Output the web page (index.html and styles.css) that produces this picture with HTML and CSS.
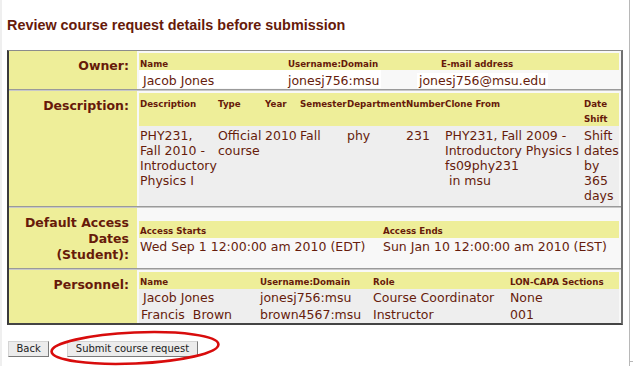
FILE: index.html
```html
<!DOCTYPE html>
<html>
<head>
<meta charset="utf-8">
<title>Review course request</title>
<link rel="stylesheet" href="styles.css">
</head>
<body>
<div class="chrome-left"></div>
<div class="chrome-right"></div>
<div class="chrome-tick"></div>
<div class="page">
  <h1 class="title">Review course request details before submission</h1>
  <table class="pick">
    <tr>
      <th class="lab">Owner:</th>
      <td class="val owner-cell">
        <table class="inner owner">
          <colgroup><col class="o1"><col class="o2"><col class="o3"></colgroup>
          <tr class="hd"><th><span>Name</span></th><th class="p2"><span>Username:Domain</span></th><th class="em"><span>E-mail address</span></th></tr>
          <tr class="dw"><td class="w p4">Jacob Jones</td><td class="w p2">jonesj756:msu</td><td><span class="wbox">jonesj756@msu.edu</span></td></tr>
        </table>
      </td>
    </tr>
    <tr class="sep"><td colspan="2"></td></tr>
    <tr>
      <th class="lab">Description:</th>
      <td class="val">
        <table class="inner desc">
          <colgroup><col class="d1"><col class="d2"><col class="d3"><col class="d4"><col class="d5"><col class="d6"><col class="d7"><col class="d8"></colgroup>
          <tr class="hd"><th><span>Description</span></th><th><span>Type</span></th><th><span>Year</span></th><th><span>Semester</span></th><th><span>Department</span></th><th><span>Number</span></th><th><span>Clone From</span></th><th><span>Date<br>Shift</span></th></tr>
          <tr class="dg"><td>PHY231,<br>Fall 2010 -<br>Introductory<br>Physics I</td><td>Official<br>course</td><td>2010</td><td>Fall</td><td>phy</td><td>231</td><td>PHY231, Fall 2009 -<br>Introductory Physics I<br>fs09phy231<br>&nbsp;in msu</td><td>Shift<br>dates<br>by<br>365<br>days</td></tr>
        </table>
      </td>
    </tr>
    <tr class="sep"><td colspan="2"></td></tr>
    <tr>
      <th class="lab">Default Access<br>Dates<br>(Student):</th>
      <td class="val mid">
        <table class="inner access">
          <colgroup><col class="a1"><col class="a2"></colgroup>
          <tr class="hd"><th><span>Access Starts</span></th><th><span>Access Ends</span></th></tr>
          <tr class="da"><td>Wed Sep 1 12:00:00 am 2010 (EDT)</td><td>Sun Jan 10 12:00:00 am 2010 (EST)</td></tr>
        </table>
      </td>
    </tr>
    <tr class="sep"><td colspan="2"></td></tr>
    <tr>
      <th class="lab">Personnel:</th>
      <td class="val">
        <table class="inner pers">
          <colgroup><col class="p1c"><col class="p2c"><col class="p3c"><col class="p4c"></colgroup>
          <tr class="hd"><th><span>Name</span></th><th><span>Username:Domain</span></th><th><span>Role</span></th><th><span>LON-CAPA Sections</span></th></tr>
          <tr class="dp"><td class="p4">Jacob Jones</td><td>jonesj756:msu</td><td>Course Coordinator</td><td>None</td></tr>
          <tr class="dp"><td class="p2">Francis&nbsp; Brown</td><td>brown4567:msu</td><td>Instructor</td><td>001</td></tr>
        </table>
      </td>
    </tr>
  </table>
  <div class="actions">
    <button class="btn back" type="button">Back</button>
    <button class="btn submit" type="button">Submit course request</button>
    <svg class="ring" width="176" height="40" viewBox="0 0 176 40" aria-hidden="true">
      <ellipse cx="86" cy="18" rx="83.5" ry="15.5" transform="rotate(-2.5 86 18)" fill="none" stroke="#d80c0c" stroke-width="2.6"/>
    </svg>
  </div>
</div>
</body>
</html>
```
FILE: styles.css
```css
html, body {
  margin: 0;
  padding: 0;
  background: #ffffff;
}
body {
  color: #661c0c;
  font-family: "DejaVu Sans", Verdana, sans-serif;
  font-size: 12.5px;
  width: 633px;
  height: 366px;
  overflow: hidden;
  position: relative;
}
.chrome-left {
  position: absolute;
  left: 0;
  top: 0;
  width: 2px;
  height: 366px;
  background: #efefef;
}
.chrome-right {
  position: absolute;
  left: 629px;
  top: 0;
  width: 1px;
  height: 366px;
  background: #b8b8b8;
}
.chrome-tick {
  position: absolute;
  left: 629px;
  top: 361px;
  width: 4px;
  height: 1px;
  background: #b8b8b8;
}
.page {
  padding: 0 0 0 7px;
}
.title {
  margin: 0 0 17px 0;
  padding-top: 17px;
  font-family: "Liberation Sans", Arial, sans-serif;
  font-weight: bold;
  font-size: 14.4px;
  line-height: 16px;
  color: #661a0a;
}
.pick {
  border-collapse: separate;
  border-spacing: 0;
  width: 616px;
  border-top: 1px solid #8c8c8c;
  border-left: 2px solid #3a3a3a;
  border-bottom: 2px solid #444444;
  border-right: 2px solid #707070;
}
.lab {
  width: 120px;
  background: #eeee99;
  text-align: right;
  vertical-align: top;
  font-weight: bold;
  font-size: 12.5px;
  line-height: 16px;
  padding: 7px 8px 5px 0;
  color: #661a0a;
  white-space: nowrap;
}
.val {
  background: #f8f8f8;
  padding: 2px 2px 0 2px;
  vertical-align: top;
}
.val.owner-cell {
  padding-bottom: 1px;
}
.val.mid {
  vertical-align: middle;
  padding-top: 3px;
}
.sep td {
  height: 2px;
  padding: 0;
  background: linear-gradient(#9a9a9a 50%, #c8c8c8 50%);
}
.inner {
  border-collapse: collapse;
  border-spacing: 0;
  table-layout: fixed;
  width: 480px;
}
.inner th, .inner td {
  text-align: left;
  vertical-align: top;
  padding: 0 0 0 1px;
  white-space: nowrap;
}
.inner .hd th {
  background: #eeee99;
  font-size: 12.5px;
  line-height: 15.6px;
  padding-top: 1.5px;
  font-weight: normal;
}
.inner .hd th span {
  font-size: 8.7px;
  line-height: 8px;
  font-weight: bold;
  color: #661a0a;
}
.inner td {
  line-height: 15px;
}
.p2 { padding-left: 2px !important; }
.p4 { padding-left: 4px !important; }

/* owner */
.o1 { width: 147px; }
.o2 { width: 95px; }
.o3 { width: 238px; }
.owner .em { padding-left: 60px; }
.owner .dw td { padding-top: 3px; }
.owner .w { background: #ffffff; }
.wbox {
  display: inline-block;
  margin-left: 36px;
  padding: 0 2px;
  background: #ffffff;
}
.owner .dw td:last-child { padding-left: 0; }

/* description */
.d1 { width: 78px; }
.d2 { width: 47px; }
.d3 { width: 35px; }
.d4 { width: 47px; }
.d5 { width: 59px; }
.d6 { width: 39px; }
.d7 { width: 139px; }
.d8 { width: 36px; }
.dg td {
  background: #eeeeee;
  padding-top: 2.5px;
  padding-bottom: 2.5px;
}

/* access */
.a1 { width: 243px; }
.a2 { width: 237px; }
.da td {
  padding-top: 1px;
  padding-bottom: 4px;
}

/* personnel */
.p1c { width: 120px; }
.p2c { width: 113px; }
.p3c { width: 137px; }
.p4c { width: 110px; }
.dp td {
  background: #eeeeee;
  padding-top: 1px;
  padding-bottom: 1px;
}

/* buttons */
.actions {
  position: relative;
  margin-top: 16px;
  padding-left: 1px;
  display: flex;
  gap: 18px;
  align-items: flex-start;
}
.btn {
  font-family: "DejaVu Sans", Verdana, sans-serif;
  font-size: 10px;
  line-height: 12px;
  color: #222222;
  background: #ececec;
  border: 1px solid;
  border-color: #d4d4d4 #7a7a7a #7a7a7a #d4d4d4;
  padding: 1px 7.5px;
  margin: 0;
  border-radius: 0;
}
.ring {
  position: absolute;
  left: 42px;
  top: -11px;
  pointer-events: none;
}
```
